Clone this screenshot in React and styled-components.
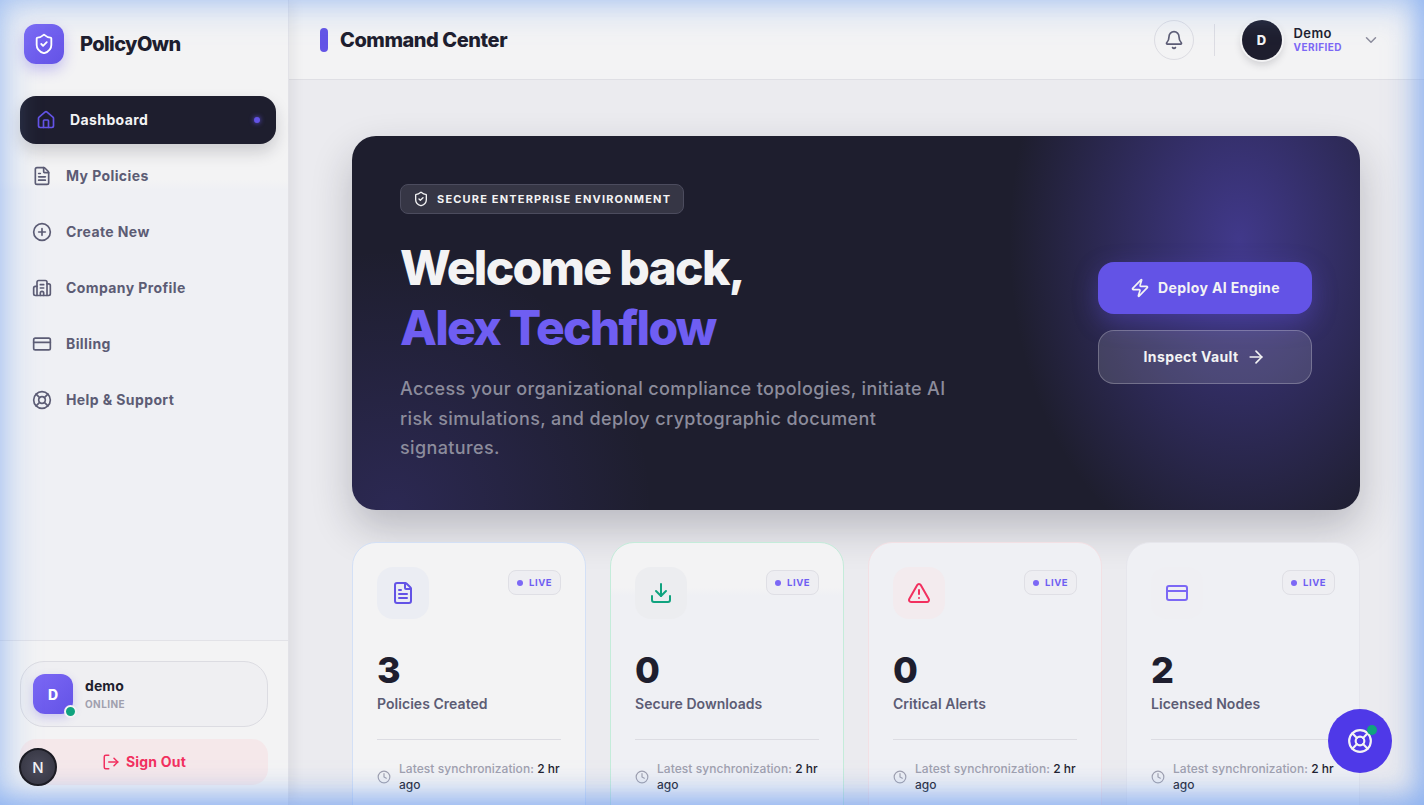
import React from 'react'
import styled, { createGlobalStyle } from 'styled-components'
import {
  ShieldCheck, House, FileText, CirclePlus, Building2, CreditCard, LifeBuoy, LogOut,
  Bell, ChevronDown, Zap, ArrowRight, Download, TriangleAlert, Clock,
} from 'lucide-react'

const GlobalStyle = createGlobalStyle`
  * { box-sizing: border-box; }
  html, body { margin: 0; height: 100%; overflow: hidden; }
  body {
    font-family: Inter, "Liberation Sans", sans-serif;
    background: #ebebef;
    color: #1e1e2e;
  }
`

const Shell = styled.div`
  position: relative;
  display: flex;
  width: 100vw;
  height: 100vh;
  overflow: hidden;
`

const EdgeGlow = styled.div`
  position: absolute;
  inset: 0;
  pointer-events: none;
  z-index: 20;
  box-shadow:
    inset 0 0 34px 4px rgba(122, 168, 242, 0.58),
    inset -8px -10px 26px -4px rgba(104, 152, 240, 0.55);
`

const Sidebar = styled.aside`
  width: 288px;
  flex-shrink: 0;
  display: flex;
  flex-direction: column;
  background: linear-gradient(#f3f3f4 0, #f3f3f4 180px, #eff0f4 190px, #eff0f4 640px, #f3f3f4 641px);
  box-shadow: 1px 0 0 #e2e2e7, 5px 0 12px rgba(30, 30, 46, 0.07);
  z-index: 1;
`

const Brand = styled.div`
  display: flex;
  align-items: center;
  gap: 16px;
  padding: 24px;
`

const BrandMark = styled.div`
  width: 40px;
  height: 40px;
  border-radius: 12px;
  display: flex;
  align-items: center;
  justify-content: center;
  color: #fff;
  background: linear-gradient(135deg, #7c68f5, #6353e6);
  box-shadow: 0 6px 14px rgba(99, 83, 230, 0.32);
`

const BrandName = styled.div`
  font-size: 20px;
  font-weight: 800;
  letter-spacing: -0.6px;
`

const Nav = styled.nav`
  flex: 1;
  display: flex;
  flex-direction: column;
  gap: 8px;
  padding: 8px 16px;
`

const NavItem = styled.a`
  height: 48px;
  display: flex;
  align-items: center;
  gap: 14px;
  padding: 0 16px;
  border-radius: 16px;
  font-size: 14px;
  font-weight: 700;
  letter-spacing: 0.4px;
  color: ${(p) => (p.$active ? '#f3f3f4' : '#5c5c74')};
  background: ${(p) => (p.$active ? '#1e1e2e' : 'transparent')};
  box-shadow: ${(p) => (p.$active ? '0 8px 16px rgba(30, 30, 46, 0.18)' : 'none')};
  transform: ${(p) => (p.$active ? 'translateX(4px)' : 'none')};
  svg { color: ${(p) => (p.$active ? '#6353e6' : '#5c5c74')}; flex-shrink: 0; }
`

const Label = styled.span`
  margin-bottom: 2px;
`

const NavDot = styled.span`
  width: 6px;
  height: 6px;
  margin-left: auto;
  border-radius: 50%;
  background: #6353e6;
  box-shadow: 0 0 5px #6353e6;
`

const SideFooter = styled.div`
  height: 165px;
  border-top: 1px solid #e2e2e7;
  padding: 20px 20px 0;
  display: flex;
  flex-direction: column;
  gap: 12px;
`

const UserCard = styled.div`
  height: 66px;
  display: flex;
  align-items: center;
  gap: 12px;
  padding: 0 12px;
  border: 1px solid #dcdce2;
  border-radius: 24px;
  background: #efeff2;
`

const SquareAvatar = styled.div`
  position: relative;
  width: 40px;
  height: 40px;
  border-radius: 12px;
  display: flex;
  align-items: center;
  justify-content: center;
  font-size: 14px;
  font-weight: 800;
  color: #fff;
  background: linear-gradient(135deg, #7c68f5, #6353e6);
  box-shadow: 0 4px 10px rgba(99, 83, 230, 0.25);
`

const OnlineDot = styled.span`
  position: absolute;
  right: -4px;
  bottom: -4px;
  width: 13px;
  height: 13px;
  border-radius: 50%;
  background: #10a37f;
  border: 2px solid #f3f3f4;
`

const UserName = styled.div`
  font-size: 14px;
  font-weight: 700;
  line-height: 18px;
  letter-spacing: 0.1px;
`

const UserState = styled.div`
  font-size: 10px;
  font-weight: 700;
  letter-spacing: 0.4px;
  line-height: 14px;
  margin-top: 2px;
  color: #a0a0ae;
`

const SignOut = styled.button`
  height: 46px;
  border: 0;
  border-radius: 16px;
  display: flex;
  align-items: center;
  justify-content: center;
  gap: 6px;
  font: 700 14px Inter, sans-serif;
  letter-spacing: 0.2px;
  color: #f2305f;
  background: #f5e8ea;
`

const DevBadge = styled.div`
  position: absolute;
  left: 19px;
  top: 748px;
  width: 38px;
  height: 38px;
  border-radius: 50%;
  display: flex;
  align-items: center;
  justify-content: center;
  font-size: 15px;
  font-weight: 500;
  color: #f3f3f4;
  background: radial-gradient(circle, #4c4c5c, #33333f);
  border: 2px solid #1c1c24;
  z-index: 30;
`

const Main = styled.div`
  flex: 1;
  min-width: 0;
  display: flex;
  flex-direction: column;
`

const Header = styled.header`
  height: 80px;
  flex-shrink: 0;
  display: flex;
  align-items: center;
  padding: 0 44px 0 32px;
  background: #f3f3f4;
  border-bottom: 1px solid #dfdfe4;
`

const TitleBar = styled.span`
  width: 8px;
  height: 24px;
  border-radius: 4px;
  background: #6353e6;
  margin-right: 12px;
`

const Title = styled.h1`
  margin: 0;
  font-size: 20px;
  font-weight: 800;
  letter-spacing: -0.45px;
`

const HeaderRight = styled.div`
  margin-left: auto;
  display: flex;
  align-items: center;
`

const BellButton = styled.div`
  width: 40px;
  height: 40px;
  border-radius: 50%;
  display: flex;
  align-items: center;
  justify-content: center;
  color: #5c5c74;
  border: 1px solid #dcdce2;
`

const Divider = styled.span`
  width: 1px;
  height: 32px;
  margin: 0 27px 0 20px;
  background: #dcdce2;
`

const RoundAvatar = styled.div`
  width: 40px;
  height: 40px;
  border-radius: 50%;
  display: flex;
  align-items: center;
  justify-content: center;
  font-size: 13px;
  font-weight: 800;
  color: #f3f3f4;
  background: #1e1e2e;
  box-shadow: 0 0 0 2px #f3f3f4, 0 4px 8px rgba(30, 30, 46, 0.2);
`

const HeadUser = styled.div`
  margin: 0 20px 0 12px;
`

const HeadName = styled.div`
  font-size: 13px;
  font-weight: 600;
  line-height: 15px;
  letter-spacing: 0.4px;
`

const HeadState = styled.div`
  font-size: 10px;
  font-weight: 700;
  letter-spacing: 0.45px;
  line-height: 12px;
  color: #7c68f5;
`

const Content = styled.main`
  flex: 1;
  min-height: 0;
  padding: 56px 64px 0;
  display: flex;
  flex-direction: column;
  gap: 32px;
`

const Hero = styled.section`
  flex-shrink: 0;
  height: 374px;
  display: flex;
  align-items: center;
  justify-content: space-between;
  padding: 48px;
  border-radius: 24px;
  color: #f3f3f4;
  background:
    radial-gradient(ellipse 230px 330px at 88% 28%, rgba(99, 83, 230, 0.5), transparent),
    radial-gradient(circle 260px at 4% 100%, rgba(99, 83, 230, 0.2), transparent),
    #1e1e2e;
  box-shadow: 0 18px 40px rgba(30, 30, 46, 0.24);
`

const HeroText = styled.div`
  align-self: flex-start;
`

const HeroBadge = styled.div`
  display: inline-flex;
  align-items: center;
  gap: 8px;
  height: 30px;
  padding: 0 12px;
  border-radius: 8px;
  font-size: 11px;
  font-weight: 700;
  letter-spacing: 1.18px;
  background: #363645;
  border: 1px solid #4c4c5e;
`

const HeroTitle = styled.h2`
  margin: 24px 0 0;
  font-size: 48px;
  font-weight: 800;
  line-height: 60px;
  letter-spacing: -1.72px;
`

const Accent = styled.span`
  display: block;
  color: #6f5ef2;
`

const HeroCopy = styled.p`
  width: 560px;
  margin: 16px 0 0;
  font-size: 18px;
  font-weight: 500;
  line-height: 29.5px;
  letter-spacing: 0.38px;
  color: #8c8c9c;
`

const HeroActions = styled.div`
  width: 214px;
  display: flex;
  flex-direction: column;
  gap: 16px;
`

const HeroButton = styled.button`
  height: ${(p) => (p.$primary ? '52px' : '54px')};
  display: flex;
  align-items: center;
  justify-content: center;
  gap: 8px;
  border-radius: 16px;
  font: 700 14px Inter, sans-serif;
  letter-spacing: 0.38px;
  color: #f3f3f4;
  background: ${(p) => (p.$primary ? '#6353e6' : 'rgba(255, 255, 255, 0.13)')};
  border: ${(p) => (p.$primary ? '0' : '1px solid rgba(255, 255, 255, 0.24)')};
  box-shadow: ${(p) => (p.$primary ? '0 8px 24px rgba(99, 83, 230, 0.35)' : 'none')};
`

const Cards = styled.section`
  display: grid;
  grid-template-columns: repeat(4, 234px);
  gap: 24px;
`

const Card = styled.article`
  height: 290px;
  padding: 24px;
  border-radius: 24px;
  border: 1px solid ${(p) => p.$edge};
  background: ${(p) => p.$fill};
`

const CardTop = styled.div`
  display: flex;
  justify-content: space-between;
  align-items: flex-start;
`

const CardIcon = styled.div`
  width: 52px;
  height: 52px;
  border-radius: 16px;
  display: flex;
  align-items: center;
  justify-content: center;
  color: ${(p) => p.$color};
  background: ${(p) => p.$tint};
`

const Live = styled.div`
  height: 25px;
  margin-top: 3px;
  padding: 0 8px;
  display: flex;
  align-items: center;
  gap: 6px;
  border-radius: 8px;
  border: 1px solid #dfdfe5;
  background: #eeeef2;
  font-size: 9.5px;
  font-weight: 700;
  letter-spacing: 0.5px;
  color: #6f5ef2;
`

const LiveDot = styled.span`
  width: 6px;
  height: 6px;
  border-radius: 50%;
  background: #7c68f5;
`

const CardNumber = styled.div`
  margin-top: 29px;
  font-size: 36px;
  font-weight: 800;
  line-height: 44px;
`

const CardLabel = styled.div`
  margin-top: 2px;
  font-size: 14px;
  font-weight: 600;
  line-height: 20px;
  letter-spacing: 0.04px;
  color: #5c5c74;
`

const CardFoot = styled.div`
  margin-top: 25px;
  padding-top: 21px;
  border-top: 1px solid #dcdce2;
  display: flex;
  align-items: center;
  gap: 8px;
  font-size: 12px;
  font-weight: 500;
  line-height: 16px;
  letter-spacing: 0.05px;
  color: #a0a0ae;
  svg { flex-shrink: 0; }
  b { font-weight: 500; color: #1e1e2e; }
`

const Fab = styled.div`
  position: absolute;
  left: 1328px;
  top: 709px;
  width: 64px;
  height: 64px;
  border-radius: 50%;
  display: flex;
  align-items: center;
  justify-content: center;
  color: #f3f3f4;
  background: #4f39e8;
  z-index: 30;
`

const FabDot = styled.span`
  position: absolute;
  top: 16px;
  right: 15px;
  width: 10px;
  height: 10px;
  border-radius: 50%;
  background: #10a37f;
`

const navItems = [
  { label: 'Dashboard', icon: House, active: true },
  { label: 'My Policies', icon: FileText },
  { label: 'Create New', icon: CirclePlus },
  { label: 'Company Profile', icon: Building2 },
  { label: 'Billing', icon: CreditCard },
  { label: 'Help & Support', icon: LifeBuoy },
]

const stats = [
  { value: '3', label: 'Policies Created', icon: FileText, color: '#6353e6', tint: '#ebedf3', edge: '#d3e0f6', fill: '#f3f3f4' },
  { value: '0', label: 'Secure Downloads', icon: Download, color: '#10a37f', tint: '#ecedf0', edge: '#c4ecda', fill: 'linear-gradient(#f3f3f4 45px, #eff0f4 52px)' },
  { value: '0', label: 'Critical Alerts', icon: TriangleAlert, color: '#f2305f', tint: '#f3ebee', edge: '#f3e0e4', fill: '#eff0f4' },
  { value: '2', label: 'Licensed Nodes', icon: CreditCard, color: '#7c68f5', tint: '#efeff3', edge: '#e6e6ec', fill: '#eff0f4' },
]

export default function App() {
  return (
    <Shell>
      <GlobalStyle />
      <Sidebar>
        <Brand>
          <BrandMark><ShieldCheck size={22} /></BrandMark>
          <BrandName>PolicyOwn</BrandName>
        </Brand>
        <Nav>
          {navItems.map((item) => (
            <NavItem key={item.label} $active={item.active}>
              <item.icon size={20} />
              <Label>{item.label}</Label>
              {item.active && <NavDot />}
            </NavItem>
          ))}
        </Nav>
        <SideFooter>
          <UserCard>
            <SquareAvatar>D<OnlineDot /></SquareAvatar>
            <div>
              <UserName>demo</UserName>
              <UserState>ONLINE</UserState>
            </div>
          </UserCard>
          <SignOut><LogOut size={18} /><Label>Sign Out</Label></SignOut>
        </SideFooter>
      </Sidebar>

      <Main>
        <Header>
          <TitleBar />
          <Title>Command Center</Title>
          <HeaderRight>
            <BellButton><Bell size={20} /></BellButton>
            <Divider />
            <RoundAvatar>D</RoundAvatar>
            <HeadUser>
              <HeadName>Demo</HeadName>
              <HeadState>VERIFIED</HeadState>
            </HeadUser>
            <ChevronDown size={18} color="#8c8c9c" />
          </HeaderRight>
        </Header>

        <Content>
          <Hero>
            <HeroText>
              <HeroBadge><ShieldCheck size={16} />SECURE ENTERPRISE ENVIRONMENT</HeroBadge>
              <HeroTitle>Welcome back,<Accent>Alex Techflow</Accent></HeroTitle>
              <HeroCopy>
                Access your organizational compliance topologies, initiate AI risk simulations, and deploy cryptographic document signatures.
              </HeroCopy>
            </HeroText>
            <HeroActions>
              <HeroButton $primary><Zap size={20} /><Label>Deploy AI Engine</Label></HeroButton>
              <HeroButton><Label>Inspect Vault</Label><ArrowRight size={20} /></HeroButton>
            </HeroActions>
          </Hero>

          <Cards>
            {stats.map((s) => (
              <Card key={s.label} $edge={s.edge} $fill={s.fill}>
                <CardTop>
                  <CardIcon $color={s.color} $tint={s.tint}><s.icon size={24} /></CardIcon>
                  <Live><LiveDot />LIVE</Live>
                </CardTop>
                <CardNumber>{s.value}</CardNumber>
                <CardLabel>{s.label}</CardLabel>
                <CardFoot>
                  <Clock size={14} />
                  <span>Latest synchronization: <b>2 hr ago</b></span>
                </CardFoot>
              </Card>
            ))}
          </Cards>
        </Content>
      </Main>

      <DevBadge>N</DevBadge>
      <Fab><LifeBuoy size={26} /><FabDot /></Fab>
      <EdgeGlow />
    </Shell>
  )
}
